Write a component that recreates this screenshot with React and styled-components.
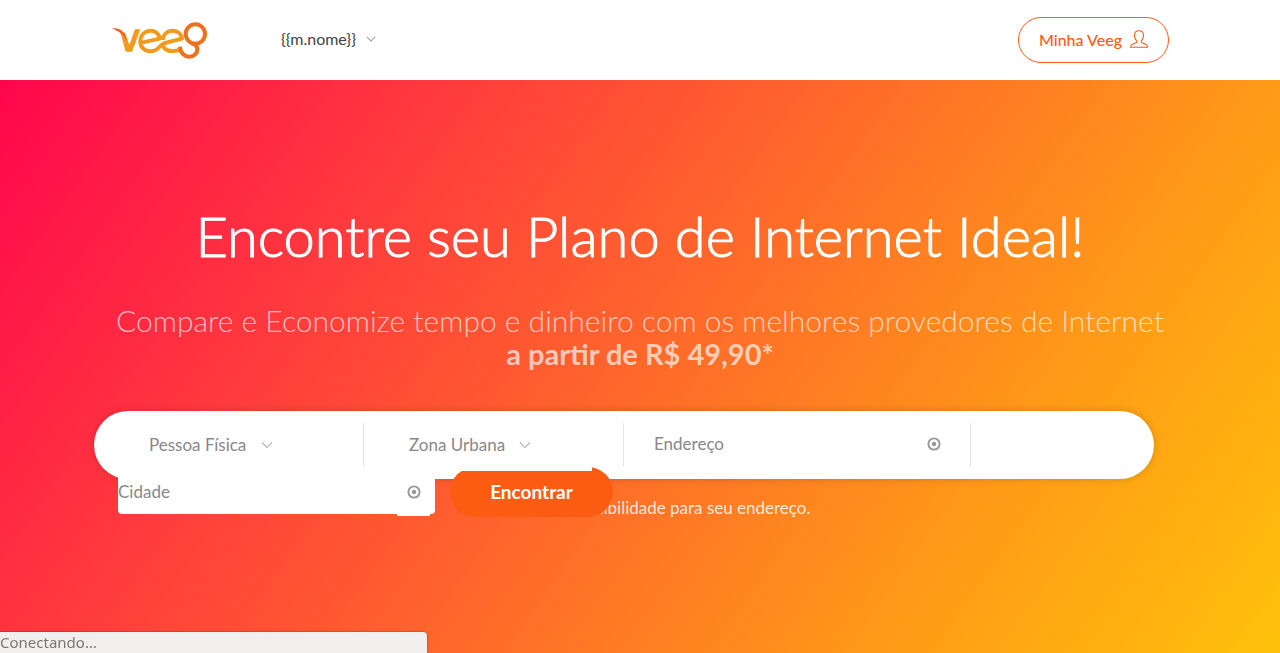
import React from "react";
import styled, { createGlobalStyle } from "styled-components";

const GlobalStyle = createGlobalStyle`
  * { box-sizing: border-box; }
  body { margin: 0; font-family: Lato, "Open Sans", sans-serif; font-size: 17px; background: #fff; }
  #root { min-height: 100vh; display: flex; flex-direction: column; }
`;

const Page = styled.div`
  flex: 1;
  display: flex;
  flex-direction: column;
`;

const Header = styled.header`
  height: 80px;
  padding: 0 111px 0 112px;
  display: flex;
  align-items: center;
  background: #fff;
`;

const LogoLink = styled.a`
  display: block;
  height: 38px;
`;

const Nav = styled.nav`
  flex: 1;
  padding: 0 0 2px 73px;
`;

const NavLink = styled.a`
  display: inline-flex;
  align-items: center;
  gap: 10px;
  color: #444;
  font-size: 16px;
  line-height: 24px;
  text-decoration: none;
`;

const AccountButton = styled.button`
  height: 46px;
  padding: 0 20px 2px;
  display: flex;
  align-items: center;
  gap: 8px;
  border: 1px solid #fc5b12;
  border-radius: 23px;
  background: #fff;
  color: #fc5b12;
  font: 500 16px Lato, sans-serif;
`;

const Hero = styled.main`
  flex: 1;
  padding: 124px 94px 120px;
  background: linear-gradient(125deg, #ff054d 0%, #ff353f 24%, #ff9a17 76%, #ffc10b 100%);
  color: #fff;
  text-align: center;
`;

const Title = styled.h1`
  margin: 0;
  font-size: 56px;
  line-height: 64px;
  font-weight: 300;
  -webkit-text-stroke: 1px #fff;
`;

const Subtitle = styled.h2`
  margin: 36px 0 0;
  font-size: 30px;
  line-height: 32px;
  font-weight: 300;
  color: rgba(255, 255, 255, 0.68);
`;

const Strong = styled.strong`
  display: block;
  margin-top: 2px;
  font-size: 29px;
  font-weight: 700;
`;

const SearchBar = styled.form`
  position: relative;
  z-index: 1;
  height: 68px;
  margin: 41px 32px 0 0;
  padding: 12px 24px 0;
  border-radius: 34px;
  background: #fff;
  box-shadow: 0 0 8px rgba(0, 0, 0, 0.16);
  text-align: left;
`;

const FieldRow = styled.div`
  display: grid;
  grid-template-columns: 246fr 260fr 347fr 159fr;
  grid-template-rows: 44px;
`;

const Field = styled.div`
  display: flex;
  align-items: flex-start;
  border-right: 1px solid #e4e4e4;
`;

const SelectBox = styled.div`
  position: relative;
  z-index: 2;
  width: 228px;
  height: 48px;
  background: #fff;
`;

const Select = styled.select`
  width: 100%;
  height: 42px;
  padding: 0 0 0 ${(p) => p.$inset}px;
  appearance: none;
  border: 0;
  background: transparent;
  color: #888;
  font: 400 17px Lato, sans-serif;
`;

const SelectArrow = styled.span`
  position: absolute;
  left: ${(p) => p.$left}px;
  top: 16px;
  height: 12px;
  display: flex;
  align-items: center;
  pointer-events: none;
`;

const TextInput = styled.input`
  flex: 1;
  min-width: 0;
  height: 40px;
  padding: 0 0 0 ${(p) => p.$inset}px;
  border: 0;
  background: transparent;
  color: #888;
  font: 400 17px Lato, sans-serif;
  &::placeholder { color: #888; opacity: 1; }
`;

const LocateButton = styled.button`
  width: 33px;
  height: 45px;
  margin-right: ${(p) => p.$gap}px;
  padding: 0 0 3px;
  display: flex;
  align-items: center;
  justify-content: center;
  border: 0;
  background: #fff;
`;

const ActionRow = styled.div`
  display: flex;
  align-items: flex-start;
  gap: 15px;
`;

const CityField = styled.div`
  width: 317px;
  height: 43px;
  margin-top: 4px;
  display: flex;
  align-items: flex-start;
  border-radius: 0 0 4px 4px;
  background: #fff;
`;

const SubmitButton = styled.button`
  width: 163px;
  height: 50px;
  padding: 0 0 2px;
  border: 0;
  border-radius: 25px;
  background: #fc5b12;
  color: #fff;
  font: 700 19px Lato, sans-serif;
`;

const Note = styled.p`
  margin: 17px 0 0;
  line-height: 24px;
  color: rgba(255, 255, 255, 0.85);
`;

const StatusBar = styled.output`
  position: fixed;
  left: 0;
  bottom: 0;
  width: 427px;
  height: 21px;
  border-radius: 0 4px 0 0;
  background: #f2f0ee;
  box-shadow: 0 0 2px rgba(0, 0, 0, 0.5);
  color: #777;
  font: 15px/21px "Noto Sans", sans-serif;
`;

function Logo() {
  return (
    <svg width="96" height="38" viewBox="35 31 288 114" fill="none" role="img" aria-label="Veeg">
      <path d="M60 64 L74 66 L87 103 L104 56 H120 L95 123 H76 Z" fill="#f39a1b" />
      <path d="M35 54 C54 49 76 60 81 93 C70 72 56 60 35 54Z" fill="#e9622a" />
      <g stroke="#f39a1b" strokeWidth="12" strokeLinejoin="round">
        <path d="M124 96 L178 84 C175 51 122 52 120 91 C119 128 164 128 178 108 C190 94 212 93 245 84 C240 52 191 52 187 88" />
        <path d="M188 106 C196 124 215 123 236 119" />
      </g>
      <circle cx="285" cy="70" r="29" stroke="#ef701d" strokeWidth="12" />
      <path d="M239 108 C240 147 292 147 291 114 C290 106 284 101 274 98" stroke="#ef701d" strokeWidth="12" />
    </svg>
  );
}

function Chevron({ color = "#bbb", size = 12 }) {
  return (
    <svg width={size} height={size} viewBox="0 0 12 12" fill="none" stroke={color} strokeWidth="1.3" aria-hidden="true">
      <path d="M1 3.5 6 8.5 11 3.5" />
    </svg>
  );
}

function Person() {
  return (
    <svg width="18" height="18" viewBox="0 0 18 18" fill="none" stroke="#fc5b12" strokeWidth="1.1" strokeLinejoin="round" aria-hidden="true">
      <path d="M6.7 11.1C5.3 9.7 4.5 7.7 4.5 5.3 4.5 2.4 6.3.7 9 .7s4.500 1.700 4.500 4.600c0 2.400-.8 4.400-2.200 5.800v1.200c0 .5 4 1.500 5.200 2.300.8.500.9 1.100.9 2.700H.6c0-1.600.1-2.200.9-2.700 1.200-.8 5.200-1.800 5.200-2.300z" />
    </svg>
  );
}

function Target() {
  return (
    <svg width="14" height="14" viewBox="0 0 14 14" fill="none" aria-hidden="true">
      <circle cx="7" cy="7" r="5.600" stroke="#999" strokeWidth="1.900" />
      <circle cx="7" cy="7" r="2.200" fill="#999" />
    </svg>
  );
}

export default function App() {
  return (
    <Page>
      <GlobalStyle />
      <Header>
        <LogoLink href="#"><Logo /></LogoLink>
        <Nav>
          <NavLink href="#">{"{{m.nome}}"}<Chevron color="#999" size={10} /></NavLink>
        </Nav>
        <AccountButton type="button">Minha Veeg<Person /></AccountButton>
      </Header>
      <Hero>
        <Title>Encontre seu Plano de Internet Ideal!</Title>
        <Subtitle>
          Compare e Economize tempo e dinheiro com os melhores provedores de Internet
          <Strong>a partir de R$ 49,90*</Strong>
        </Subtitle>
        <SearchBar onSubmit={(e) => e.preventDefault()}>
          <FieldRow>
            <Field>
              <SelectBox>
                <Select $inset={31} aria-label="Tipo de pessoa"><option>Pessoa Física</option></Select>
                <SelectArrow $left={143}><Chevron /></SelectArrow>
              </SelectBox>
            </Field>
            <Field>
              <SelectBox>
                <Select $inset={45} aria-label="Zona"><option>Zona Urbana</option></Select>
                <SelectArrow $left={155}><Chevron /></SelectArrow>
              </SelectBox>
            </Field>
            <Field>
              <TextInput $inset={30} placeholder="Endereço" aria-label="Endereço" />
              <LocateButton type="button" $gap={20} aria-label="Localizar endereço"><Target /></LocateButton>
            </Field>
          </FieldRow>
          <ActionRow>
            <CityField>
              <TextInput $inset={0} placeholder="Cidade" aria-label="Cidade" />
              <LocateButton type="button" $gap={5} aria-label="Localizar cidade"><Target /></LocateButton>
            </CityField>
            <SubmitButton type="submit">Encontrar</SubmitButton>
          </ActionRow>
        </SearchBar>
        <Note>Verifique a disponibilidade para seu endereço.</Note>
      </Hero>
      <StatusBar>Conectando…</StatusBar>
    </Page>
  );
}
